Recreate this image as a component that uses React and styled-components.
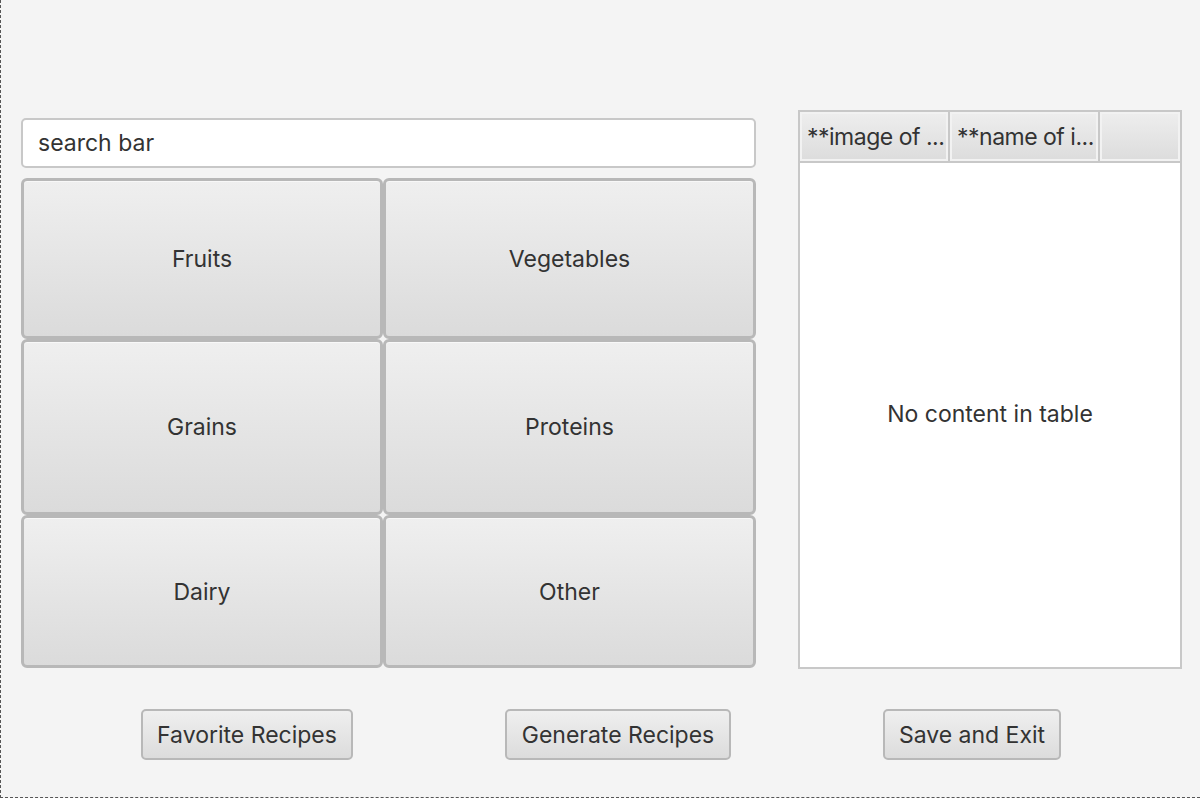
import React from "react";
import styled, { createGlobalStyle } from "styled-components";

const GlobalStyle = createGlobalStyle`
  html, body {
    margin: 0;
    padding: 0;
    background: #f4f4f4;
  }
  * {
    box-sizing: border-box;
  }
`;

const Window = styled.div`
  width: 1200px;
  height: 798px;
  background: #f4f4f4;
  border-left: 1px dashed #555;
  border-bottom: 1px dashed #555;
  font-family: Inter, "Liberation Sans", sans-serif;
  color: #333;
  display: flex;
  flex-direction: column;
  padding-top: 110px;
  overflow: hidden;
`;

const Main = styled.div`
  display: flex;
  align-items: flex-start;
  padding-left: 20px;
  gap: 42px;
`;

const LeftCol = styled.div`
  width: 735px;
  margin-top: 8px;
  display: flex;
  flex-direction: column;
  gap: 10px;
`;

const SearchBar = styled.input`
  height: 50px;
  width: 100%;
  border: 2px solid #c8c8c8;
  border-radius: 5px;
  background: #fff;
  padding: 0 15px;
  font-family: inherit;
  font-size: 23px;
  color: #333;
  outline: none;
  &::placeholder {
    color: #333;
  }
`;

const CategoryGrid = styled.div`
  display: grid;
  grid-template-columns: 362px 373px;
  grid-template-rows: 161px 176px 153px;
  gap: 0;
`;

const Category = styled.button`
  border: 3px solid #b8b8b8;
  border-radius: 6px;
  background: linear-gradient(#efefef, #dbdbdb);
  box-shadow: inset 0 1px 0 #f8f8f8;
  font-family: inherit;
  font-size: 23px;
  color: #333;
  padding: 0;
  margin: 0;
`;

const Table = styled.div`
  width: 384px;
  height: 559px;
  border: 2px solid #c8c8c8;
  background: #fff;
  display: flex;
  flex-direction: column;
`;

const HeaderRow = styled.div`
  display: flex;
  height: 51px;
  border-bottom: 2px solid #c8c8c8;
`;

const HeaderCell = styled.div`
  width: ${(p) => (p.$w ? `${p.$w}px` : "auto")};
  flex: ${(p) => (p.$w ? "none" : "1")};
  border-right: ${(p) => (p.$last ? "none" : "2px solid #c8c8c8")};
  background: linear-gradient(#eeeeee, #dcdcdc);
  box-shadow: inset 0 0 0 2px #f2f2f2;
  display: flex;
  align-items: center;
  padding-left: 7px;
  font-size: 23px;
  letter-spacing: -0.5px;
  white-space: nowrap;
  overflow: hidden;
`;

const Empty = styled.div`
  flex: 1;
  display: flex;
  align-items: center;
  justify-content: center;
  font-size: 23px;
  color: #333;
  padding-bottom: 2px;
`;

const BottomRow = styled.div`
  display: flex;
  gap: 152px;
  padding-left: 140px;
  margin-top: 40px;
`;

const ActionButton = styled.button`
  height: 51px;
  flex-shrink: 0;
  border: 2px solid #b8b8b8;
  border-radius: 5px;
  background: linear-gradient(#efefef, #dcdcdc);
  font-family: inherit;
  font-size: 23px;
  color: #333;
  padding: 0;
  white-space: nowrap;
  width: ${(p) => p.$w}px;
`;

const categories = ["Fruits", "Vegetables", "Grains", "Proteins", "Dairy", "Other"];

export default function App() {
  return (
    <>
      <GlobalStyle />
      <Window>
        <Main>
          <LeftCol>
            <SearchBar placeholder="search bar" />
            <CategoryGrid>
              {categories.map((c) => (
                <Category key={c}>{c}</Category>
              ))}
            </CategoryGrid>
          </LeftCol>
          <Table>
            <HeaderRow>
              <HeaderCell $w={150}>**image of ...</HeaderCell>
              <HeaderCell $w={150}>**name of i...</HeaderCell>
              <HeaderCell $last />
            </HeaderRow>
            <Empty>No content in table</Empty>
          </Table>
        </Main>
        <BottomRow>
          <ActionButton $w={212}>Favorite Recipes</ActionButton>
          <ActionButton $w={226}>Generate Recipes</ActionButton>
          <ActionButton $w={178}>Save and Exit</ActionButton>
        </BottomRow>
      </Window>
    </>
  );
}
